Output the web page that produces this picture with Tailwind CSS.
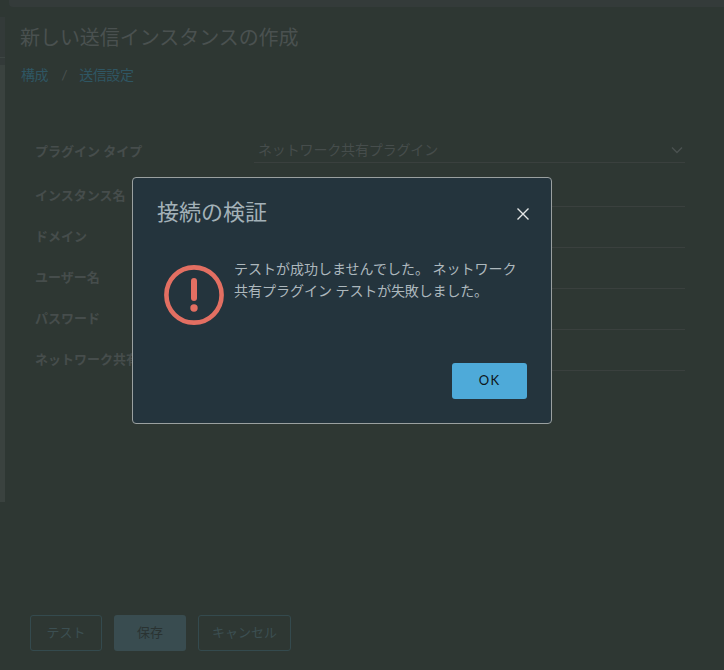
<!DOCTYPE html>
<html lang="ja">
<head>
<meta charset="utf-8">
<script src="https://cdn.jsdelivr.net/npm/@tailwindcss/browser@4"></script>
</head>
<body class="m-0 bg-[#2e3733] font-['Lato','Noto_Sans_CJK_JP',sans-serif]">
<div class="relative h-[670px] w-[724px] overflow-hidden bg-[#2e3733]">
  <div class="ml-[9px] h-[7px] rounded-bl-[4px] bg-[#343b3a]"></div>
  <div class="flex h-[663px]">
    <div class="mt-[10px] flex h-[485px] w-[5px] flex-col">
      <div class="h-[40px] bg-[#333a39]"></div>
      <div class="h-px bg-[#3d4543]"></div>
      <div class="h-[7px] bg-[#333a39]"></div>
      <div class="flex-1 bg-[#3a423f]"></div>
    </div>
    <main class="flex h-full flex-1 flex-col">
      <h1 class="ml-[15px] mt-[18px] text-[20px] leading-[24px] tracking-[-0.05px] text-[#4a5150]">新しい送信インスタンスの作成</h1>
      <nav class="ml-[16px] mt-[17px] flex items-center text-[14px] leading-[18px] tracking-[-0.4px] text-[#2f5663]">
        <span>構成</span><span class="ml-[13px] mr-[12px] text-[#4a5150]">/</span><span>送信設定</span>
      </nav>
      <form class="ml-[30px] mr-[39px] mt-[38px] flex flex-col text-[13px]">
        <div class="flex h-[41px] items-end">
          <label class="w-[219px] pb-[2px] font-bold leading-[20px] text-[#464d4c]">プラグイン タイプ</label>
          <div class="flex h-[26px] flex-1 items-center justify-between border-b border-[#3a403e] pl-[4px] pr-[2px] text-[14px] tracking-[-0.15px] text-[#464d4c]">
            <span>ネットワーク共有プラグイン</span>
            <svg class="h-3 w-3" viewBox="0 0 12 12" fill="none" stroke="#4a5150" stroke-width="1.4"><path d="M1 3.5l5 5 5-5"/></svg>
          </div>
        </div>
        <div class="flex h-[44px] items-end"><label class="w-[219px] pb-[2px] font-bold leading-[20px] text-[#464d4c]">インスタンス名</label><div class="h-[26px] flex-1 border-b border-[#3a403e]"></div></div>
        <div class="flex h-[41px] items-end"><label class="w-[219px] pb-[2px] font-bold leading-[20px] text-[#464d4c]">ドメイン</label><div class="h-[26px] flex-1 border-b border-[#3a403e]"></div></div>
        <div class="flex h-[41px] items-end"><label class="w-[219px] pb-[2px] font-bold leading-[20px] text-[#464d4c]">ユーザー名</label><div class="h-[26px] flex-1 border-b border-[#3a403e]"></div></div>
        <div class="flex h-[41px] items-end"><label class="w-[219px] pb-[2px] font-bold leading-[20px] text-[#464d4c]">パスワード</label><div class="h-[26px] flex-1 border-b border-[#3a403e]"></div></div>
        <div class="flex h-[41px] items-end"><label class="w-[219px] pb-[2px] font-bold leading-[20px] text-[#464d4c]">ネットワーク共有</label><div class="h-[26px] flex-1 border-b border-[#3a403e]"></div></div>
      </form>
      <div class="ml-[25px] mt-auto mb-[19px] flex gap-[12px] text-[13px]">
        <button class="h-[36px] w-[72px] rounded-[3px] border border-[#344a4e] text-[#3c4f52]">テスト</button>
        <button class="h-[36px] w-[72px] rounded-[3px] bg-[#394c50] text-[#2a3332]">保存</button>
        <button class="h-[36px] w-[93px] rounded-[3px] border border-[#344a4e] text-[#3c4f52]">キャンセル</button>
      </div>
    </main>
  </div>
  <div class="absolute left-[132px] top-[177px] flex h-[247px] w-[420px] flex-col rounded-[4px] border border-[#9aa0a0] bg-[#24343d]">
    <div class="mt-[20px] flex items-start justify-between pl-[24px] pr-[21px]">
      <h2 class="text-[22px] leading-[28px] text-[#a3b1b8]">接続の検証</h2>
      <svg class="mt-[9px] h-[14px] w-[14px]" viewBox="0 0 14 14" fill="none" stroke="#e4e6e6" stroke-width="1.4"><path d="M1.5 1.5l11 11M12.5 1.5l-11 11"/></svg>
    </div>
    <div class="mt-[32px] flex pl-[31px] pr-[30px]">
      <svg class="mt-[7px] h-[60px] w-[60px] shrink-0" viewBox="0 0 60 60" fill="none"><circle cx="30" cy="30" r="27.6" stroke="#e36f62" stroke-width="4.6"/><rect x="27" y="13" width="6" height="23" rx="3" fill="#e36f62"/><circle cx="30" cy="43" r="3.7" fill="#e36f62"/></svg>
      <p class="ml-[10px] text-[14px] leading-[22px] text-[#adb8bd]">テストが成功しませんでした。 ネットワーク<br>共有プラグイン <span class="tracking-[-0.15px]">テストが失敗しました。</span></p>
    </div>
    <div class="mt-auto mb-[24px] flex justify-end pr-[24px]">
      <button class="h-[36px] w-[75px] rounded-[3px] bg-[#4eaad9] text-[13px] font-normal tracking-[1.2px] text-[#0d1518]">OK</button>
    </div>
  </div>
</div>
</body>
</html>
